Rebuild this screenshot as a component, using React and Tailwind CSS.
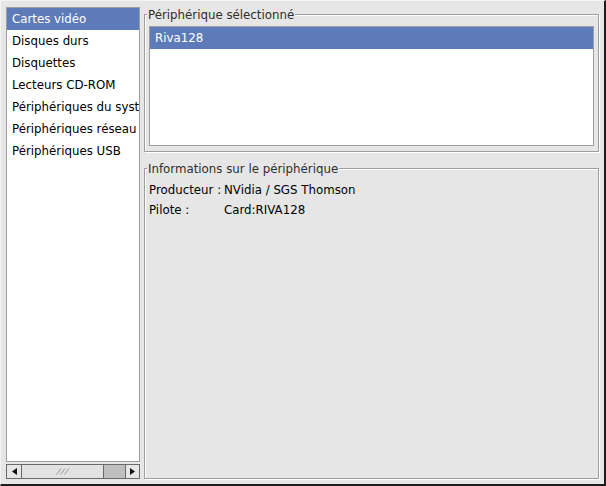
const DEVICE_TYPES = [
  'Cartes vidéo',
  'Disques durs',
  'Disquettes',
  'Lecteurs CD-ROM',
  'Périphériques du système',
  'Périphériques réseau',
  'Périphériques USB',
]

const INFO = [
  { label: 'Producteur :', value: 'NVidia / SGS Thomson' },
  { label: 'Pilote :', value: 'Card:RIVA128' },
]

function Group({ title, className, children }) {
  return (
    <fieldset
      className={`border border-[#9e9e9e] shadow-[inset_1px_1px_0_#fff,1px_1px_0_#fff] ${className}`}
    >
      <legend className="relative top-px ml-[-2px] px-px bg-[#e6e6e6] leading-[15px] text-[#2e2e2e]">{title}</legend>
      {children}
    </fieldset>
  )
}

function Arrow({ dir }) {
  return (
    <svg width="5" height="7" viewBox="0 0 5 7" className="block">
      {dir === 'left'
        ? <path d="M5 0 L0 3.5 L5 7 Z" fill="#111" />
        : <path d="M0 0 L5 3.5 L0 7 Z" fill="#111" />}
    </svg>
  )
}

function HScrollbar() {
  return (
    <div className="mt-[2px] h-[15px] flex border border-[#6a6a6a] bg-[#bfbfbf]">
      <div className="w-[15px] flex items-center justify-center bg-[#e6e6e6] border-r border-[#6a6a6a]">
        <Arrow dir="left" />
      </div>
      <div className="w-[82px] flex items-center justify-center bg-[#e2e2e2] border-r border-[#6a6a6a]">
        <svg width="14" height="7" viewBox="0 0 14 7" className="block">
          <path d="M0.5 6.5 L5 0.5 M4.5 6.5 L9 0.5 M8.5 6.5 L13 0.5" stroke="#9a9a9a" strokeWidth="1" />
        </svg>
      </div>
      <div className="flex-1" />
      <div className="w-[14px] flex items-center justify-center bg-[#e6e6e6] border-l border-[#6a6a6a]">
        <Arrow dir="right" />
      </div>
    </div>
  )
}

export default function App() {
  return (
    <div
      className="w-[606px] h-[486px] bg-[#e6e6e6] border-t border-l border-t-[#f4f4f4] border-l-[#f4f4f4] border-r-2 border-b-2 border-r-[#1c1c1c] border-b-[#1c1c1c] flex gap-[4px] pl-[5px] pr-[5px] pt-[6px] pb-[5px] text-[11.8px] text-black"
      style={{ fontFamily: '"DejaVu Sans", Verdana, sans-serif' }}
    >
      {/* Device category list */}
      <div className="w-[134px] flex flex-col">
        <div className="flex-1 bg-white border border-[#9e9e9e] overflow-hidden">
          {DEVICE_TYPES.map((name, i) => (
            <div
              key={name}
              className={`h-[22px] pt-px leading-[21px] pl-[5px] whitespace-nowrap ${i === 0 ? 'bg-[#5d7bb8] text-white' : ''}`}
            >
              {name}
            </div>
          ))}
        </div>
        <HScrollbar />
      </div>

      {/* Details */}
      <div className="flex-1 flex flex-col gap-[9px]">
        <Group title="Périphérique sélectionné" className="h-[145px] px-[4px] pt-[4px] pb-[4px]">
          <div className="h-[120px] bg-white border border-[#9e9e9e]">
            <div className="h-[22px] pt-px leading-[21px] pl-[5px] bg-[#5d7bb8] text-white">Riva128</div>
          </div>
        </Group>

        <Group title="Informations sur le périphérique" className="flex-1 px-[4px] pt-[4px]">
          {INFO.map(row => (
            <div key={row.label} className="h-5 leading-5 flex whitespace-nowrap">
              <span className="w-[75px]">{row.label}</span>
              <span>{row.value}</span>
            </div>
          ))}
        </Group>
      </div>
    </div>
  )
}
